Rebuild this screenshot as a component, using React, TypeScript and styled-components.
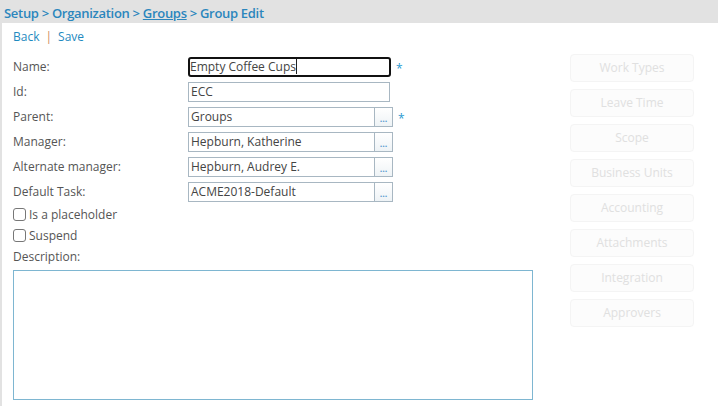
import React from "react";
import styled, { createGlobalStyle } from "styled-components";

const Global = createGlobalStyle`
  html, body {
    margin: 0;
    padding: 0;
    background: #fff;
    font-family: "Open Sans", "Liberation Sans", sans-serif;
  }
`;

const Page = styled.div`
  width: 718px;
  height: 406px;
  overflow: hidden;
  border-left: 2px solid #e2e2e2;
  box-sizing: border-box;
`;

const Crumbs = styled.div`
  height: 23px;
  background: #e2e2e2;
  margin-left: -2px;
  padding: 4px 0 0 4px;
  box-sizing: border-box;
  font-size: 13px;
  font-weight: 600;
  letter-spacing: -0.3px;
  color: #2b86bd;
  a {
    color: #2b86bd;
    text-decoration: underline;
  }
`;

const Actions = styled.div`
  padding: 5px 0 0 11px;
  height: 28px;
  box-sizing: border-box;
  font-size: 12px;
  color: #1f8ac0;
  display: flex;
  gap: 6px;
`;

const Sep = styled.span`
  color: #d08a5a;
`;

const Body = styled.div`
  display: flex;
  justify-content: space-between;
  padding: 3px 24px 0 11px;
`;

const Form = styled.div`
  width: 522px;
  display: flex;
  flex-direction: column;
`;

const Row = styled.div`
  display: flex;
  align-items: center;
  height: 25px;
`;

const Label = styled.div`
  width: 175px;
  font-size: 12px;
  color: #555;
`;

const Field = styled.div<{ $w: number }>`
  width: ${(p) => p.$w}px;
  height: 20px;
  display: flex;
  box-sizing: border-box;
  border: 1px solid #a8b7c2;
  background: #fff;
`;

const Focused = styled(Field)`
  border: 2px solid #111;
  border-radius: 3px;
`;

const Value = styled.div`
  flex: 1;
  font-size: 12px;
  color: #444;
  padding: 0 0 0 2px;
  line-height: 18px;
  white-space: nowrap;
`;

const Caret = styled.span`
  display: inline-block;
  width: 1px;
  height: 15px;
  background: #222;
  vertical-align: -3px;
`;

const Dots = styled.div`
  width: 18px;
  border-left: 1px solid #a8b7c2;
  box-sizing: border-box;
  font-size: 9px;
  font-weight: 700;
  color: #5b9bd0;
  text-align: center;
  line-height: 22px;
  background: linear-gradient(#fff, #eef3f6);
`;

const Star = styled.span`
  color: #2b9bd1;
  font-size: 12px;
  margin-left: 5px;
  margin-top: 4px;
`;

const Check = styled.label`
  display: flex;
  align-items: center;
  gap: 3px;
  height: 21px;
  font-size: 12px;
  color: #555;
`;

const Box = styled.span`
  width: 11px;
  height: 11px;
  border: 1px solid #777;
  border-radius: 3px;
  background: #fff;
`;

const DescLabel = styled(Label)`
  height: 21px;
  line-height: 21px;
`;

const TextArea = styled.div`
  margin-top: 3px;
  width: 520px;
  height: 130px;
  box-sizing: border-box;
  border: 1px solid #7eb6d1;
`;

const Side = styled.div`
  display: flex;
  flex-direction: column;
  gap: 7px;
`;

const SideButton = styled.div`
  width: 124px;
  height: 28px;
  box-sizing: border-box;
  border: 1px solid #f4f4f4;
  border-radius: 4px;
  background: #fcfcfc;
  color: #e0e0e0;
  font-size: 12px;
  text-align: center;
  line-height: 26px;
`;

const fields = [
  { label: "Manager:", value: "Hepburn, Katherine" },
  { label: "Alternate manager:", value: "Hepburn, Audrey E." },
  { label: "Default Task:", value: "ACME2018-Default" },
];

const sideItems = [
  "Work Types",
  "Leave Time",
  "Scope",
  "Business Units",
  "Accounting",
  "Attachments",
  "Integration",
  "Approvers",
];

export default function App() {
  return (
    <Page>
      <Global />
      <Crumbs>
        Setup &gt; Organization &gt; <a>Groups</a> &gt; Group Edit
      </Crumbs>
      <Actions>
        <span>Back</span>
        <Sep>|</Sep>
        <span>Save</span>
      </Actions>
      <Body>
        <Form>
          <Row>
            <Label>Name:</Label>
            <Focused $w={203}>
              <Value style={{ lineHeight: "16px", paddingLeft: 0 }}>
                Empty Coffee Cups<Caret />
              </Value>
            </Focused>
            <Star>*</Star>
          </Row>
          <Row>
            <Label>Id:</Label>
            <Field $w={202}>
              <Value>ECC</Value>
            </Field>
          </Row>
          <Row>
            <Label>Parent:</Label>
            <Field $w={205}>
              <Value>Groups</Value>
              <Dots>...</Dots>
            </Field>
            <Star>*</Star>
          </Row>
          {fields.map((f) => (
            <Row key={f.label}>
              <Label>{f.label}</Label>
              <Field $w={205}>
                <Value>{f.value}</Value>
                <Dots>...</Dots>
              </Field>
            </Row>
          ))}
          <Check>
            <Box />
            Is a placeholder
          </Check>
          <Check>
            <Box />
            Suspend
          </Check>
          <DescLabel>Description:</DescLabel>
          <TextArea />
        </Form>
        <Side>
          {sideItems.map((s) => (
            <SideButton key={s}>{s}</SideButton>
          ))}
        </Side>
      </Body>
    </Page>
  );
}
